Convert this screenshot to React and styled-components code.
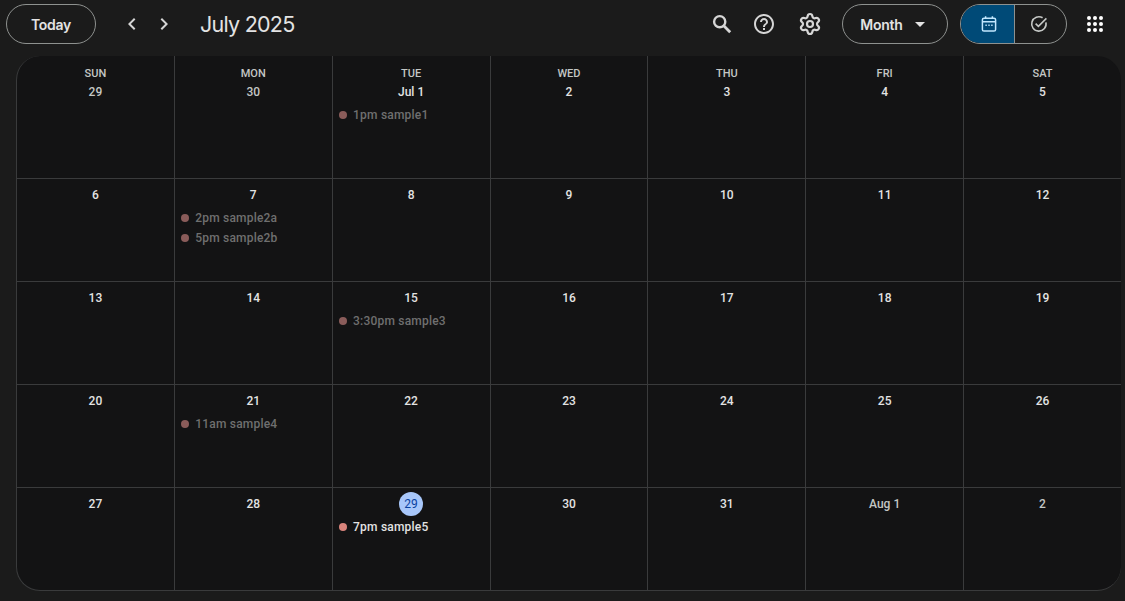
import React from "react";
import styled, { createGlobalStyle } from "styled-components";
import { MdHelpOutline, MdChevronLeft, MdChevronRight, MdArrowDropDown } from "react-icons/md";
import { Settings } from "lucide-react";

const GlobalStyle = createGlobalStyle`
  html, body {
    margin: 0;
    padding: 0;
    background: #1b1b1b;
    overflow: hidden;
  }
  body {
    font-family: Roboto, "Liberation Sans", sans-serif;
    color: #e3e3e3;
  }
`;

const Page = styled.div`
  width: 1125px;
  height: 601px;
  background: #1b1b1b;
  display: flex;
  flex-direction: column;
`;

const Toolbar = styled.header`
  height: 56px;
  box-sizing: border-box;
  padding: 0 18px 8px 6px;
  display: flex;
  align-items: center;
`;

const PillButton = styled.button`
  height: 40px;
  box-sizing: border-box;
  width: ${(p) => p.$width}px;
  border: 1px solid #8e918f;
  border-radius: 20px;
  background: transparent;
  color: #e3e3e3;
  font-family: Inter, Roboto, sans-serif;
  font-size: 14px;
  font-weight: 600;
  letter-spacing: -0.25px;
  display: flex;
  align-items: center;
  justify-content: center;
  padding: 0;
`;

const Caret = styled(MdArrowDropDown)`
  font-size: 24px;
  margin: 0 -2px 0 5px;
`;

const NavGroup = styled.div`
  display: flex;
  align-items: center;
  gap: 8px;
  margin-left: 24px;
`;

const IconButton = styled.span`
  width: 24px;
  height: 24px;
  display: flex;
  align-items: center;
  justify-content: center;
  color: #d6d6d6;
  font-size: 24px;
`;

const SearchButton = styled(IconButton)`
  margin-right: -4px;
`;

const Title = styled.h1`
  margin: 0 0 0 24px;
  font-family: Inter, Roboto, sans-serif;
  font-size: 21.5px;
  font-weight: 400;
  letter-spacing: -0.75px;
  color: #e3e3e3;
  flex: 1;
`;

const Tools = styled.div`
  display: flex;
  align-items: center;
  gap: 22px;
  margin-right: 20px;
`;

const ViewSwitch = styled.div`
  width: 107px;
  height: 40px;
  box-sizing: border-box;
  margin-left: 12px;
  border: 1px solid #8e918f;
  border-radius: 20px;
  display: flex;
  overflow: hidden;
`;

const ViewTab = styled.span`
  flex: 1;
  display: flex;
  align-items: center;
  justify-content: center;
  padding-left: ${(p) => (p.$active ? "4px" : "0")};
  padding-right: ${(p) => (p.$active ? "0" : "3px")};
  background: ${(p) => (p.$active ? "#004a77" : "transparent")};
  color: ${(p) => (p.$active ? "#c2e7ff" : "#c4c7c5")};
  & + & {
    border-left: 1px solid #8e918f;
  }
`;

const AppsButton = styled(IconButton)`
  margin-left: 16px;
  color: #fff;
`;

const Grid = styled.main`
  width: 1105px;
  height: 535px;
  margin-left: 16px;
  box-sizing: border-box;
  background: #131314;
  border-left: 1px solid #3a3b3c;
  border-bottom: 1px solid #3a3b3c;
  border-radius: 24px;
  overflow: hidden;
  display: grid;
  grid-template-columns: repeat(6, 157.857px) 1fr;
  grid-template-rows: 123px repeat(4, 103px);
`;

const Cell = styled.div`
  box-sizing: border-box;
  min-width: 0;
  border-right: ${(p) => (p.$last ? "none" : "1px solid #3a3b3c")};
  border-bottom: ${(p) => (p.$bottom ? "none" : "1px solid #3a3b3c")};
  padding-top: ${(p) => (p.$first ? "11px" : "4px")};
  display: flex;
  flex-direction: column;
  align-items: center;
`;

const Weekday = styled.div`
  font-size: 11px;
  font-weight: 500;
  line-height: 13px;
  color: #c4c7c5;
`;

const DayNumber = styled.div`
  height: 24px;
  min-width: 24px;
  border-radius: 12px;
  display: flex;
  align-items: center;
  justify-content: center;
  font-size: 12px;
  font-weight: ${(p) => (p.$today ? 400 : 500)};
  color: ${(p) => (p.$today ? "#0842a0" : p.$muted || p.$past ? "#c4c7c5" : "#e3e3e3")};
  background: ${(p) => (p.$today ? "#a8c7fa" : "transparent")};
`;

const EventList = styled.div`
  width: 100%;
  box-sizing: border-box;
  padding: 0 0 0 6.4px;
  margin-top: 1px;
  display: flex;
  flex-direction: column;
  gap: 1px;
`;

const EventRow = styled.div`
  height: 19px;
  display: flex;
  align-items: center;
  gap: 6px;
  font-size: 12px;
  font-weight: 500;
  letter-spacing: 0.2px;
  white-space: nowrap;
  color: ${(p) => (p.$past ? "#6f6f6f" : "#e3e3e3")};
`;

const Dot = styled.span`
  width: 8px;
  height: 8px;
  border-radius: 50%;
  flex: none;
  background: ${(p) => (p.$past ? "#8a5c5a" : "#d9847c")};
`;

const SearchIcon = () => (
  <svg width="24" height="24" viewBox="0 0 24 24" fill="none" stroke="currentColor">
    <circle cx="9.7" cy="9.7" r="5.6" strokeWidth="2.4" />
    <path d="M14 14l6.2 6.2" strokeWidth="2.8" />
  </svg>
);

const CalendarIcon = () => (
  <svg width="18" height="18" viewBox="0 0 18 18" fill="none" stroke="currentColor" strokeWidth="1.5">
    <rect x="2.4" y="3.2" width="13.2" height="12.8" rx="1.6" />
    <path d="M2.4 6.8h13.2M5.6 1.2v2.8M12.4 1.2v2.8" />
    <path d="M5.4 10.2h1.4M8.3 10.2h1.4M11.2 10.2h1.4" strokeWidth="1.4" />
  </svg>
);

const TaskIcon = () => (
  <svg width="18" height="18" viewBox="0 0 18 18" fill="none" stroke="currentColor" strokeWidth="1.6">
    <path d="M15.9 7.4A7.2 7.2 0 1 1 12.6 2.8" />
    <path d="M5.6 8.6l2.8 2.8 8-8" />
  </svg>
);

const AppsIcon = () => (
  <svg width="24" height="24" viewBox="0 0 24 24" fill="currentColor">
    {[6, 12, 18].map((y) =>
      [6, 12, 18].map((x) => <circle key={`${x}-${y}`} cx={x} cy={y} r="2" />)
    )}
  </svg>
);

const weekdays = ["SUN", "MON", "TUE", "WED", "THU", "FRI", "SAT"];

const days = [
  { label: "29", past: true },
  { label: "30", past: true },
  { label: "Jul 1", events: [{ text: "1pm sample1", past: true }] },
  { label: "2" }, { label: "3" }, { label: "4" }, { label: "5" },
  { label: "6" },
  { label: "7", events: [{ text: "2pm sample2a", past: true }, { text: "5pm sample2b", past: true }] },
  { label: "8" }, { label: "9" }, { label: "10" }, { label: "11" }, { label: "12" },
  { label: "13" }, { label: "14" },
  { label: "15", events: [{ text: "3:30pm sample3", past: true }] },
  { label: "16" }, { label: "17" }, { label: "18" }, { label: "19" },
  { label: "20" },
  { label: "21", events: [{ text: "11am sample4", past: true }] },
  { label: "22" }, { label: "23" }, { label: "24" }, { label: "25" }, { label: "26" },
  { label: "27" }, { label: "28" },
  { label: "29", today: true, events: [{ text: "7pm sample5" }] },
  { label: "30" }, { label: "31" },
  { label: "Aug 1", muted: true },
  { label: "2", muted: true },
];

export default function App() {
  return (
    <Page>
      <GlobalStyle />
      <Toolbar>
        <PillButton $width={90}>Today</PillButton>
        <NavGroup>
          <IconButton><MdChevronLeft /></IconButton>
          <IconButton><MdChevronRight /></IconButton>
        </NavGroup>
        <Title>July 2025</Title>
        <Tools>
          <SearchButton><SearchIcon /></SearchButton>
          <IconButton><MdHelpOutline /></IconButton>
          <IconButton><Settings size={24} strokeWidth={2.2} /></IconButton>
        </Tools>
        <PillButton $width={106}>
          Month
          <Caret />
        </PillButton>
        <ViewSwitch>
          <ViewTab $active><CalendarIcon /></ViewTab>
          <ViewTab><TaskIcon /></ViewTab>
        </ViewSwitch>
        <AppsButton><AppsIcon /></AppsButton>
      </Toolbar>
      <Grid>
        {days.map((day, i) => (
          <Cell key={i} $first={i < 7} $last={i % 7 === 6} $bottom={i >= 28}>
            {i < 7 && <Weekday>{weekdays[i]}</Weekday>}
            <DayNumber $today={day.today} $muted={day.muted} $past={day.past}>{day.label}</DayNumber>
            {day.events && (
              <EventList>
                {day.events.map((ev) => (
                  <EventRow key={ev.text} $past={ev.past}>
                    <Dot $past={ev.past} />
                    {ev.text}
                  </EventRow>
                ))}
              </EventList>
            )}
          </Cell>
        ))}
      </Grid>
    </Page>
  );
}
